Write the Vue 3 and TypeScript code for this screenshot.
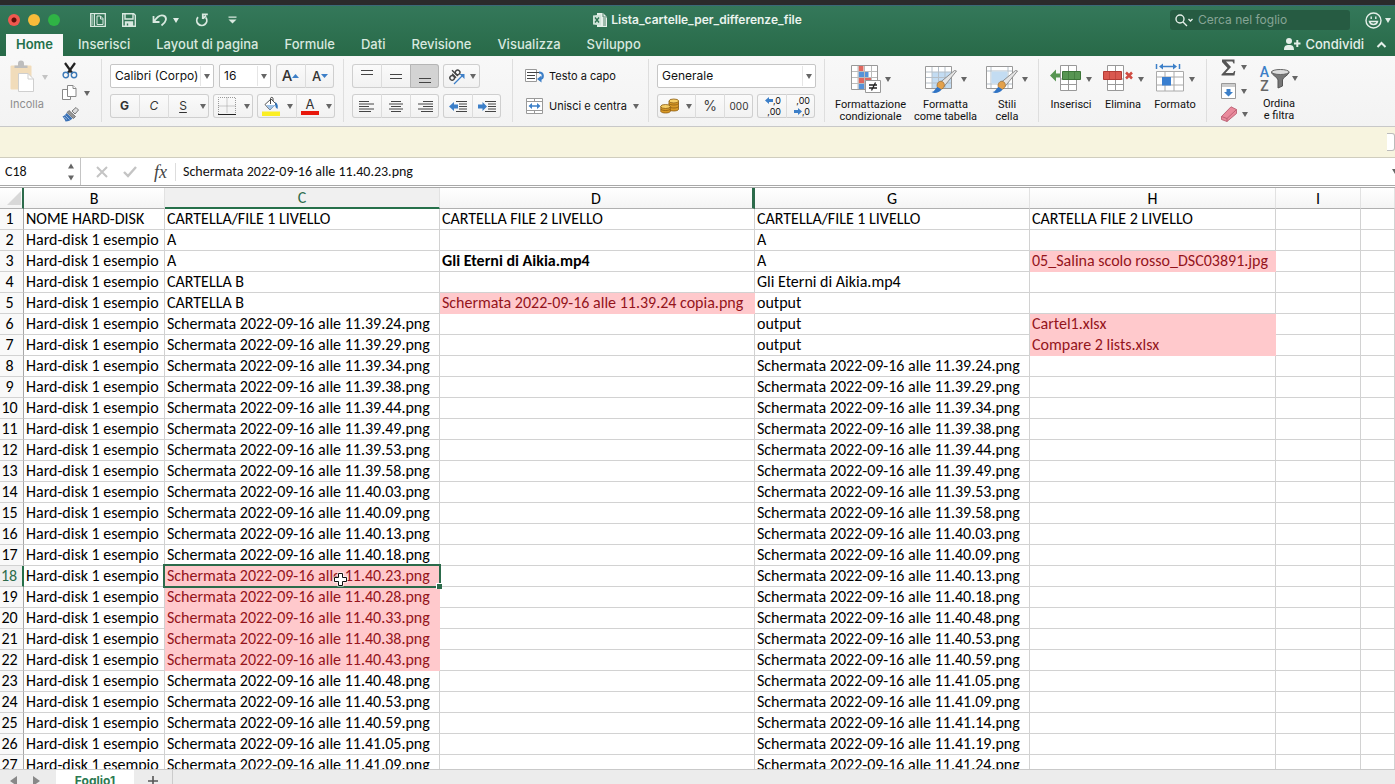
<script setup lang="ts">
import { ref } from 'vue'

interface Cell {
  text: string
  bad?: boolean
  bold?: boolean
}
interface Row {
  n: number
  cells: Cell[]
}

const tabs: string[] = ['Home', 'Inserisci', 'Layout di pagina', 'Formule', 'Dati', 'Revisione', 'Visualizza', 'Sviluppo']
const columns: string[] = ['B', 'C', 'D', 'G', 'H', 'I', '']
const selectedRow = 18

const shot = (time: string): string => `Schermata 2022-09-16 alle ${time}.png`

const times: string[] = [
  '11.39.24', '11.39.29', '11.39.34', '11.39.38', '11.39.44', '11.39.49', '11.39.53', '11.39.58',
  '11.40.03', '11.40.09', '11.40.13', '11.40.18', '11.40.23', '11.40.28', '11.40.33', '11.40.38',
  '11.40.43', '11.40.48', '11.40.53', '11.40.59', '11.41.05', '11.41.09', '11.41.14', '11.41.19', '11.41.24',
]
const missing: string[] = ['11.40.23', '11.40.28', '11.40.33', '11.40.38', '11.40.43']

const firstList: Cell[] = [
  { text: 'CARTELLA/FILE 1 LIVELLO' },
  { text: 'A' },
  { text: 'A' },
  { text: 'CARTELLA B' },
  { text: 'CARTELLA B' },
  ...times.map((t) => ({ text: shot(t), bad: missing.includes(t) })),
]
const secondList: Cell[] = [
  { text: 'CARTELLA/FILE 1 LIVELLO' },
  { text: 'A' },
  { text: 'A' },
  { text: 'Gli Eterni di Aikia.mp4' },
  { text: 'output' },
  { text: 'output' },
  { text: 'output' },
  ...times.filter((t) => !missing.includes(t)).map((t) => ({ text: shot(t) })),
]
const firstSub: Record<number, Cell> = {
  1: { text: 'CARTELLA FILE 2 LIVELLO' },
  3: { text: 'Gli Eterni di Aikia.mp4', bold: true },
  5: { text: 'Schermata 2022-09-16 alle 11.39.24 copia.png', bad: true },
}
const secondSub: Record<number, Cell> = {
  1: { text: 'CARTELLA FILE 2 LIVELLO' },
  3: { text: '05_Salina scolo rosso_DSC03891.jpg', bad: true },
  6: { text: 'Cartel1.xlsx', bad: true },
  7: { text: 'Compare 2 lists.xlsx', bad: true },
}
const empty: Cell = { text: '' }

const rows: Row[] = Array.from({ length: 27 }, (_, i) => {
  const n = i + 1
  return {
    n,
    cells: [
      { text: n === 1 ? 'NOME HARD-DISK' : 'Hard-disk 1 esempio' },
      firstList[i],
      firstSub[n] ?? empty,
      secondList[i],
      secondSub[n] ?? empty,
      empty,
      empty,
    ],
  }
})

const cellName = ref('C18')
const formula = ref(shot('11.40.23'))
const search = ref('')
</script>

<template>
  <div class="window">
    <div class="desktop-strip"></div>
    <header class="top">
      <div class="titlebar">
        <div class="title-left">
          <div class="lights">
            <button class="light close" aria-label="Chiudi"></button>
            <button class="light min" aria-label="Riduci"></button>
            <button class="light max" aria-label="Ingrandisci"></button>
          </div>
          <div class="quick">
            <button aria-label="Modelli">
              <svg width="16" height="14" viewBox="0 0 16 14" fill="none" stroke="#d9e9e0"><path d="M.7.7h14.6v12.6H.7z" stroke-width="1.300" /><path d="M4.500 1v12M1.500 3h2M1.500 5h2M1.500 7h2M1.500 9h2M1.500 11h2" /><path d="M7 3h3.500l2.500 2.500v6H7zM10.500 3v3H13" /></svg>
            </button>
            <button aria-label="Salva">
              <svg width="14" height="14" viewBox="0 0 14 14" fill="none" stroke="#d9e9e0" stroke-width="1.400"><path d="M.7.7h11l1.600 1.600v11H.7z" /><path d="M3 1v5h8V1" /><path d="M3.500 13V9h7v4" fill="#d9e9e0" /><path d="M5.500 10.500v2" stroke="#2c7150" /></svg>
            </button>
            <button aria-label="Annulla">
              <svg width="16" height="14" viewBox="0 0 16 14" fill="none" stroke="#d9e9e0" stroke-width="1.800"><path d="M1.500 3v6h6M2 8.500C5 4 8 1.500 11.500 2.700c4 1.500 3 6.300-2 9.800" /></svg>
              <i class="caret light-caret"></i>
            </button>
            <button aria-label="Ripeti">
              <svg width="14" height="14" viewBox="0 0 14 14" fill="none" stroke="#d9e9e0" stroke-width="1.800"><path d="M3 4.200A5 5 0 1 0 10.800 4.500M7.800 6V1.400h5M8 5.600l3-3" /></svg>
            </button>
            <button aria-label="Personalizza">
              <svg width="9" height="8" viewBox="0 0 9 8" fill="#d9e9e0"><path d="M.5.5h8v1.300h-8zM.5 3.500h8l-4 4z" /></svg>
            </button>
          </div>
        </div>
        <h1 class="title">
          <svg width="14" height="14" viewBox="0 0 14 14"><path d="M4 0h6l4 4v10H4z" fill="#e5f0ea" /><path d="M10 0v4h4" fill="none" stroke="#55856c" /><path d="M10 6h3M10 8h3M10 10h3M10 12h3" stroke="#55856c" /><path d="M0 2.500 8 1.500v11L0 11.500z" fill="#cfe3d8" /><path d="m2 4.500 4 5M6 4.500l-4 5" stroke="#2c7150" stroke-width="1.300" /></svg>
          Lista_cartelle_per_differenze_file
        </h1>
        <div class="title-right">
          <label class="search">
            <svg width="19" height="13" viewBox="0 0 19 13" fill="none" stroke="#e5efe9" stroke-width="1.400"><circle cx="5" cy="5" r="4" /><path d="m8 8 4 4M13.500 5l2 2 2-2" /></svg>
            <input v-model="search" type="text" placeholder="Cerca nel foglio" aria-label="Cerca nel foglio" />
          </label>
          <button class="smile" aria-label="Commenti e suggerimenti">
            <svg width="17" height="17" viewBox="0 0 17 17" fill="none" stroke="#e5efe9" stroke-width="1.400"><circle cx="8.500" cy="8.500" r="7.500" /><path d="M4.500 9.500c1 4 7 4 8 0zM6.200 4.500v2.500M10.800 4.500v2.500" /></svg>
            <i class="caret light-caret"></i>
          </button>
        </div>
      </div>
      <nav class="tabs">
        <button v-for="t in tabs" :key="t" :class="{ active: t === 'Home' }">{{ t }}</button>
        <button class="share">
          <svg width="17" height="12" viewBox="0 0 17 12" fill="#e5efe9"><circle cx="5" cy="3" r="3" /><path d="M0 12c0-4 1.500-5 5-5s5 1 5 5zM12.300 2h2v7h-2z" /><path d="M10 4.500h6.500v2H10z" /></svg>
          Condividi
        </button>
        <button class="collapse" aria-label="Comprimi barra multifunzione">
          <svg width="11" height="7" viewBox="0 0 11 7" fill="none" stroke="#e5efe9" stroke-width="2"><path d="m1.500 6 4-4 4 4" /></svg>
        </button>
      </nav>
    </header>

    <section class="ribbon" aria-label="Home">
      <div class="group clipboard">
        <button class="paste">
          <span class="iconrow">
            <svg width="26" height="31" viewBox="0 0 26 31"><rect x=".5" y="3.500" width="21" height="24" rx="1" fill="#f1dcba" /><path d="M4.500 6V3.500H8V1.500a2 2 0 0 1 6 0v2h3.500V6z" fill="#bdbdbd" /><path d="M8.500 11.500H18l5.500 5.500v12.500h-15z" fill="#fff" stroke="#cfcfcf" /><path d="M18 11.500V17h5.500" fill="none" stroke="#cfcfcf" /></svg>
            <i class="caret pale"></i>
          </span>
          <span>Incolla</span>
        </button>
        <div class="clip-tools">
          <button aria-label="Taglia">
            <svg width="16" height="17" viewBox="0 0 16 17" fill="none"><path d="m3 1 7.500 10.500M13 1 5.500 11.500" stroke="#222" stroke-width="2.200" /><circle cx="3.800" cy="13" r="2.700" stroke="#3d7ab8" stroke-width="1.400" /><circle cx="12" cy="13" r="2.700" stroke="#3d7ab8" stroke-width="1.400" /></svg>
          </button>
          <button aria-label="Copia">
            <svg width="15" height="16" viewBox="0 0 15 16" fill="#fff" stroke="#888"><path d="M.5 4.500h6l2 2v8h-8z" /><path d="M5.500.5H11l3 3v8H5.500z" /><path d="M11 .5v3h3" /></svg>
            <i class="caret"></i>
          </button>
          <button aria-label="Copia formato">
            <svg width="17" height="15" viewBox="0 0 17 15"><path d="m10 4 4-3.500 2.500 2.500L13 7z" fill="#ddd" stroke="#777" /><path d="m7 3.500 6.500 6-2 2-6.500-6z" fill="#999" stroke="#555" stroke-width=".7" /><path d="m4.500 6 6 5.500c-2 2-4 3-7 3C3 12 1.500 11 .5 9.500 2 9 3.500 8 4.500 6z" fill="#3a71b5" /><path d="m2 10 3 2.500M3.500 8.500l4 4" stroke="#bdd1ea" stroke-width=".7" /></svg>
          </button>
        </div>
      </div>

      <div class="group font">
        <div class="line">
          <label class="combo wide"><select aria-label="Tipo di carattere"><option>Calibri (Corpo)</option></select><i class="caret"></i></label>
          <label class="combo size"><select aria-label="Dimensione carattere"><option>16</option></select><i class="caret"></i></label>
          <div class="seg">
            <button class="big" aria-label="Aumenta carattere">A<svg width="7" height="5" viewBox="0 0 7 5"><path d="m0 4 3.500-4L7 4z" fill="#3c7fc8" /></svg></button>
            <button class="mid" aria-label="Riduci carattere">A<svg width="7" height="5" viewBox="0 0 7 5"><path d="m0 0 3.500 4L7 0z" fill="#3c7fc8" /></svg></button>
          </div>
        </div>
        <div class="line tight">
          <div class="seg">
            <button class="g">G</button>
            <button class="c">C</button>
            <button class="s">S</button>
            <button class="drop" aria-label="Opzioni sottolineato"><i class="caret"></i></button>
          </div>
          <div class="seg">
            <button class="borders" aria-label="Bordi"><svg width="18" height="18" viewBox="0 0 18 18" fill="none" stroke="#9a9a9a"><path d="M.5 17V.5h17V17M9 .5v16M.5 9h17" stroke-dasharray="1 1" /><path d="M0 17.500h18" stroke="#222" /></svg></button>
            <button class="drop" aria-label="Opzioni bordi"><i class="caret"></i></button>
          </div>
          <div class="seg">
            <button class="fill" aria-label="Colore riempimento"><svg width="18" height="19" viewBox="0 0 18 19"><path d="M3 7.500 9 2l5 5-6 6z" fill="#fff" stroke="#555" /><path d="M4 8h9.500L8 13z" fill="#9fc3e8" /><path d="M8.500 7V1.500c0-1.500 2.500-1.500 2.500 0V4" fill="none" stroke="#444" /><path d="M13 5c2 1 3.500 3 2.500 7-2-1-2.500-3-2-5z" fill="#2d73bd" /><path d="M0 14.500h18V19H0z" fill="#fbee23" /></svg></button>
            <button class="drop" aria-label="Colori riempimento"><i class="caret"></i></button>
            <button class="fontcolor" aria-label="Colore carattere"><span>A</span><b></b></button>
            <button class="drop" aria-label="Colori carattere"><i class="caret"></i></button>
          </div>
        </div>
      </div>

      <div class="group align">
        <div class="line tight">
          <div class="seg">
            <button aria-label="Allinea in alto"><svg width="14" height="16" viewBox="0 0 14 16" stroke="#444"><path d="M1 2.500h12M1 6.500h12" /></svg></button>
            <button aria-label="Allinea al centro"><svg width="14" height="16" viewBox="0 0 14 16" stroke="#444"><path d="M1 6.500h12M1 10.500h12" /></svg></button>
            <button class="pressed" aria-label="Allinea in basso"><svg width="14" height="16" viewBox="0 0 14 16" stroke="#444"><path d="M1 10.500h12M1 14.500h12" /></svg></button>
          </div>
          <div class="seg">
            <button class="orient" aria-label="Orientamento">
              <svg width="19" height="18" viewBox="0 0 19 18"><g transform="rotate(-45 8 8)" fill="none" stroke="#444" stroke-width="1.400"><circle cx="4" cy="8" r="2.300" /><path d="M6.800 5.200v5.500M9.300 2.500v8.200" /><circle cx="11.700" cy="8" r="2.300" /></g><path d="m7 17 9-9" stroke="#3c7fc8" stroke-width="1.300" /><path d="M12.500 7h5v5z" fill="#3c7fc8" /></svg>
              <i class="caret"></i>
            </button>
          </div>
        </div>
        <div class="line tight">
          <div class="seg">
            <button aria-label="Allinea a sinistra"><svg width="16" height="11" viewBox="0 0 16 11" stroke="#444"><path d="M0 .5h10M0 3h15M0 5.500h10M0 8h15M0 10.500h12" /></svg></button>
            <button aria-label="Centra"><svg width="16" height="11" viewBox="0 0 16 11" stroke="#444"><path d="M3 .5h10M1 3h14M3 5.500h10M1 8h14M3 10.500h10" /></svg></button>
            <button aria-label="Allinea a destra"><svg width="16" height="11" viewBox="0 0 16 11" stroke="#444"><path d="M6 .5h10M1 3h15M6 5.500h10M1 8h15M4 10.500h12" /></svg></button>
          </div>
          <div class="seg">
            <button aria-label="Riduci rientro"><svg width="18" height="11" viewBox="0 0 18 11"><path d="M7 .5h11M10 3h8M10 5.500h8M10 8h8M7 10.500h11" stroke="#444" /><path d="m0 5.500 5-4.500v2.500h4v4H5V10z" fill="#3c7fc8" /></svg></button>
            <button aria-label="Aumenta rientro"><svg width="18" height="11" viewBox="0 0 18 11"><path d="M7 .5h11M10 3h8M10 5.500h8M10 8h8M7 10.500h11" stroke="#444" /><path d="M9 5.500 4.500 1v2.500H0v4h4.500V10z" fill="#3c7fc8" /></svg></button>
          </div>
        </div>
      </div>

      <div class="group wrap">
        <button class="text-tool">
          <svg width="20" height="14" viewBox="0 0 20 14"><path d="M.5.500h11v12H.5z" fill="#fff" stroke="#999" /><path d="M2 3.500h12M2 6.500h8M2 9.500h8" stroke="#444" /><path d="M14 3.500c5 0 5 6 1 6.500" fill="none" stroke="#3c7fc8" stroke-width="2" /><path d="m12 10 4.500-3.500v7z" fill="#3c7fc8" /></svg>
          Testo a capo
        </button>
        <button class="text-tool">
          <svg width="20" height="16" viewBox="0 0 20 16"><path d="M1.500.5h16v15h-16zM1.500 3.500h16M1.500 12.500h16M9.500.5v3M9.500 12.500v3" fill="#fff" stroke="#999" /><path d="M6 8h7" stroke="#3c7fc8" stroke-width="1.500" /><path d="m3.500 8 3.500-3v6zM15.500 8 12 5v6z" fill="#3c7fc8" /></svg>
          Unisci e centra
          <i class="caret"></i>
        </button>
      </div>

      <div class="group number">
        <div class="line">
          <label class="combo full"><select aria-label="Formato numero"><option>Generale</option></select><i class="caret"></i></label>
        </div>
        <div class="line tight">
          <div class="seg">
            <button class="coins" aria-label="Valuta"><svg width="20" height="16" viewBox="0 0 20 16" stroke="#8a5a10" stroke-width=".8"><path d="M9 3v8.500c1 2 8.500 2 9.500 0V3z" fill="#d99a27" /><path d="M9 5.500c1 2 8.500 2 9.500 0M9 8.500c1 2 8.500 2 9.500 0" fill="none" /><ellipse cx="13.800" cy="3" rx="4.800" ry="2" fill="#f6cf68" /><path d="M.8 8.500v5c1 2 8.500 2 9.500 0v-5z" fill="#d99a27" /><path d="M.8 11c1 2 8.500 2 9.500 0" fill="none" /><ellipse cx="5.500" cy="8.500" rx="4.800" ry="2" fill="#f6cf68" /></svg></button>
            <button class="drop" aria-label="Opzioni valuta"><i class="caret"></i></button>
            <button class="pct">%</button>
            <button class="thousand">000</button>
          </div>
          <div class="seg">
            <button class="dec" aria-label="Aumenta decimali"><span><svg width="8" height="7" viewBox="0 0 8 7"><path d="m0 3.500 4-3.500v2h4v3H4v2z" fill="#3c7fc8" /></svg>,0</span><span>,00</span></button>
            <button class="dec" aria-label="Riduci decimali"><span>,00</span><span><svg width="8" height="7" viewBox="0 0 8 7"><path d="M8 3.500 4 0v2H0v3h4v2z" fill="#3c7fc8" /></svg>,0</span></button>
          </div>
        </div>
      </div>

      <div class="group styles">
        <button class="large w75">
          <span class="iconrow"><svg width="30" height="30" viewBox="0 0 30 30"><path d="M.5 1.500h26v24H.5z" fill="#fff" stroke="#999" /><path d="M7.500 2v5h5V2z" fill="#e0685f" /><path d="M7.500 8h10v5h-10z" fill="#5593d8" /><path d="M7.500 14h13v5h-13z" fill="#e0685f" /><path d="M7.500 20h6v5h-6z" fill="#5593d8" /><path d="M1 7.500h25M1 13.500h25M1 19.500h25M7 2v23M13.500 2v23M20.500 2v23" stroke="#bbb" fill="none" /><path d="M14.500 16.500h15v12h-15z" fill="#fff" stroke="#999" /><path d="M18 21h8M18 24h8M24.500 18.500l-4 8" stroke="#222" stroke-width="1.300" /></svg><i class="caret"></i></span>
          <span>Formattazione<br />condizionale</span>
        </button>
        <button class="large w75">
          <span class="iconrow"><svg width="32" height="30" viewBox="0 0 32 30"><path d="M.5 2.500h26v22H.5z" fill="#fff" stroke="#999" /><path d="M7 8h19v16H7z" fill="#c3dcf2" /><path d="M1 8h25M1 13.500h25M1 19h25M7 3v21M13.500 3v21M20 3v21" stroke="#b5bfc8" /><path d="m31.500 7-2-.500L15 18.500l4 4z" fill="#e4e4e4" stroke="#777" stroke-width=".8" /><path d="M12 21c1-4 4-4.500 6-3 2 2 2 5-1 7-2 1-5 0-5-4z" fill="#e3a14b" stroke="#8a5a20" stroke-width=".6" /><path d="M6.500 28c3 0 3-3 6-5l4 2.500c-2 3-7 4.500-10 2.500z" fill="#2f73c4" /></svg><i class="caret"></i></span>
          <span>Formatta<br />come tabella</span>
        </button>
        <button class="large w48">
          <span class="iconrow"><svg width="32" height="30" viewBox="0 0 32 30"><path d="M.5 2.500h26v22H.5z" fill="#fff" stroke="#999" /><path d="M1 7h25M1 20h25M5 3v21M22 3v21" stroke="#b5bfc8" /><path d="M5.500 7.500h16v12h-16z" fill="#c3dcf2" /><path d="m31.500 7-2-.500L15 18.500l4 4z" fill="#e4e4e4" stroke="#777" stroke-width=".8" /><path d="M12 21c1-4 4-4.500 6-3 2 2 2 5-1 7-2 1-5 0-5-4z" fill="#e3a14b" stroke="#8a5a20" stroke-width=".6" /><path d="M6.500 28c3 0 3-3 6-5l4 2.500c-2 3-7 4.500-10 2.500z" fill="#2f73c4" /></svg><i class="caret"></i></span>
          <span>Stili<br />cella</span>
        </button>
      </div>

      <div class="group cellsgroup">
        <button class="large w52">
          <span class="iconrow"><svg width="32" height="30" viewBox="0 0 32 30"><path d="M10.500 1.500h16v25h-16zM10.500 20.500h16M18.500 1.500v25M10.500 15h16" fill="#fff" stroke="#999" /><path d="M12.500 7.500h18v8h-18z" fill="#579552" stroke="#3b7437" /><path d="M18.500 8v7M24.500 8v7" stroke="#467f42" /><path d="m0 11.500 6-6v4h4v4H6v4z" fill="#579552" /></svg><i class="caret"></i></span>
          <span>Inserisci</span>
        </button>
        <button class="large w52">
          <span class="iconrow"><svg width="32" height="30" viewBox="0 0 32 30"><path d="M5.500 1.500h16v25h-16zM5.500 20.500h16M13.500 1.500v25M5.500 15h16" fill="#fff" stroke="#999" /><path d="M1.500 7.500h18v8h-18z" fill="#d9584f" stroke="#b33b34" /><path d="M7.500 8v7M13.500 8v7" stroke="#c2463f" /><path d="m24 8.500 6 6M30 8.500l-6 6" stroke="#cf4b42" stroke-width="2.500" /></svg><i class="caret"></i></span>
          <span>Elimina</span>
        </button>
        <button class="large w52">
          <span class="iconrow"><svg width="30" height="30" viewBox="0 0 30 30"><path d="M1.500 7.500h27v19.500h-27zM10 7.500v19.500M19 7.500v19.500M1.500 13h27M1.500 21h27" fill="#fff" stroke="#aaa" /><path d="M7 13h9v8.500H7z" fill="#3a7fd0" /><path d="M1.500 0v5M24.500 0v5" stroke="#3c7fc8" stroke-width="1.500" /><path d="M7 2.500h12" stroke="#3c7fc8" stroke-width="1.500" /><path d="m4 2.500 4-3v6zM22 2.500l-4-3v6z" fill="#3c7fc8" /></svg><i class="caret"></i></span>
          <span>Formato</span>
        </button>
      </div>

      <div class="group edit">
        <div class="edit-tools">
          <button aria-label="Somma automatica"><svg width="15" height="17" viewBox="0 0 15 17"><path d="M1 .5h12.500v4h-1l-1-2H5l5 5.500-5.500 6H12l1.300-2h1l-.8 4.500H.5v-1l6-6.500-5.500-6z" fill="#555" /></svg><i class="caret"></i></button>
          <button aria-label="Riempimento"><svg width="15" height="16" viewBox="0 0 15 16"><path d="M.5.5h14v15H.5z" fill="#fff" stroke="#999" /><path d="M1 1h13v3H1z" fill="#ccc" /><path d="M5.500 6h4v3H12l-4.500 4.500L3 9h2.500z" fill="#3c7fc8" /></svg><i class="caret"></i></button>
          <button aria-label="Cancella"><svg width="16" height="16" viewBox="0 0 16 16" stroke="#b4566a" stroke-width=".8"><path d="m.5 10.500 9.500-9.700 5.500 2.700v4L6 15.500l-5.500-2z" fill="#e98a9c" /><path d="m.5 10.500 5.500 2 9.500-9M6 12.500v3" fill="none" /></svg><i class="caret"></i></button>
        </div>
        <button class="large w52">
          <span class="iconrow sort"><span class="az"><b>A</b><b>Z</b></span><svg width="19" height="20" viewBox="0 0 19 20"><path d="M.5 3c0 3 6 5 6.500 8v8l4.500-2v-6c.5-3 6.500-5 6.500-8z" fill="#777" stroke="#555" /><ellipse cx="9.300" cy="3" rx="8.800" ry="2.500" fill="#ddd" stroke="#666" /></svg><i class="caret"></i></span>
          <span>Ordina<br />e filtra</span>
        </button>
      </div>
    </section>

    <div class="notice"><button aria-label="Chiudi avviso"></button></div>

    <div class="formula-bar">
      <div class="namebox">
        <input v-model="cellName" type="text" aria-label="Casella nome" />
        <svg width="8" height="18" viewBox="0 0 8 18" fill="#666"><path d="m1 5.500 3-5 3 5zM1 12.500h6l-3 5z" /></svg>
      </div>
      <button aria-label="Annulla modifica"><svg width="12" height="12" viewBox="0 0 12 12" stroke="#c4c4c4" stroke-width="2"><path d="m1 1 10 10M11 1 1 11" /></svg></button>
      <button aria-label="Conferma"><svg width="14" height="12" viewBox="0 0 14 12" fill="none" stroke="#c4c4c4" stroke-width="2.400"><path d="m1 6 4 4 8-9" /></svg></button>
      <button class="fx">fx</button>
      <input v-model="formula" class="formula" type="text" aria-label="Barra della formula" />
      <i class="caret"></i>
    </div>

    <main class="sheet">
      <table>
        <colgroup>
          <col class="k-head" /><col class="k-b" /><col class="k-c" /><col class="k-d" /><col class="k-c" /><col class="k-h" /><col class="k-i" /><col />
        </colgroup>
        <thead>
          <tr>
            <th class="corner"><svg width="14" height="14" viewBox="0 0 14 14"><path d="M14 0v14H0z" fill="#d8d8d8" /></svg></th>
            <th v-for="c in columns" :key="c" scope="col" :class="{ current: c === 'C', hiddenafter: c === 'D' }">{{ c }}</th>
          </tr>
        </thead>
        <tbody>
          <tr v-for="r in rows" :key="r.n">
            <th scope="row" :class="{ current: r.n === selectedRow }">{{ r.n }}</th>
            <td v-for="(c, i) in r.cells" :key="i" :class="{ bad: c.bad, bold: c.bold }">
              {{ c.text }}
              <span v-if="r.n === selectedRow && i === 1" class="selection">
                <svg class="pointer" width="15" height="15" viewBox="0 0 15 15"><path d="M5.500 1.500h4v4h4v4h-4v4h-4v-4h-4v-4h4z" fill="#fff" stroke="#fff" stroke-width="2" /><path d="M5.500 1.500h4v4h4v4h-4v4h-4v-4h-4v-4h4z" fill="#fff" stroke="#111" /></svg>
              </span>
            </td>
          </tr>
        </tbody>
      </table>
    </main>

    <footer class="sheet-tabs">
      <button class="nav" aria-label="Foglio precedente"><svg width="7" height="10" viewBox="0 0 7 10"><path d="M7 0v10L0 5z" fill="#888" /></svg></button>
      <button class="nav" aria-label="Foglio successivo"><svg width="7" height="10" viewBox="0 0 7 10"><path d="M0 0v10l7-5z" fill="#888" /></svg></button>
      <button class="sheet-tab">Foglio1</button>
      <button class="add" aria-label="Aggiungi foglio"><svg width="10" height="10" viewBox="0 0 10 10" stroke="#555" stroke-width="1.600"><path d="M5 0v10M0 5h10" /></svg></button>
    </footer>
  </div>
</template>

<style>
body {
  margin: 0;
}
</style>

<style scoped>
* {
  box-sizing: border-box;
}
.window {
  height: 100vh;
  display: flex;
  flex-direction: column;
  overflow: hidden;
  background: #fff;
  color: #111;
  font: 12px/16px Inter, 'Liberation Sans', sans-serif;
}
button,
input,
select {
  font: inherit;
  color: inherit;
  background: none;
  border: 0;
  padding: 0;
  margin: 0;
  outline: 0;
}
button {
  display: flex;
  align-items: center;
  justify-content: center;
  flex: none;
  white-space: nowrap;
}
svg {
  display: block;
  flex: none;
  overflow: visible;
}
.caret {
  flex: none;
  width: 0;
  height: 0;
  border: 3px solid transparent;
  border-top: 5px solid #666;
  border-bottom: 0;
}
.caret.pale {
  border-top-color: #c4c4c4;
}
.light-caret {
  border-top-color: #e0ece6;
}
.desktop-strip {
  flex: none;
  height: 5px;
  background: #2b2b2b;
}
.top {
  flex: none;
  background: linear-gradient(#34785a, #286a48);
  border-top: 1px solid #3a6a78;
  color: #d8e8df;
}
.titlebar {
  height: 28px;
  display: grid;
  grid-template-columns: 1fr auto 1fr;
  align-items: center;
}
.title-left,
.lights,
.quick,
.title-right {
  display: flex;
  align-items: center;
}
.lights {
  gap: 8px;
  padding-left: 8px;
}
.light {
  width: 12px;
  height: 12px;
  border-radius: 50%;
}
.close {
  background: radial-gradient(circle, #5e0f0a 0 2px, #f1584f 3px);
}
.min {
  background: #f8bb3a;
}
.max {
  background: #2fb445;
}
.quick {
  gap: 16px;
  padding-left: 30px;
}
.quick button {
  gap: 5px;
}
.quick button:last-child {
  margin-left: 3px;
}
.title {
  margin: 0;
  display: flex;
  align-items: center;
  gap: 4px;
  font-size: 12px;
  line-height: 16px;
  font-weight: 600;
  color: #eaf3ee;
}
.title-right {
  justify-content: flex-end;
  padding-right: 4px;
}
.search {
  display: flex;
  align-items: center;
  gap: 4px;
  width: 180px;
  height: 20px;
  padding-left: 5px;
  border-radius: 3px;
  background: #265b42;
}
.search input {
  flex: 1;
  min-width: 0;
}
.search input::placeholder {
  color: #86a596;
  opacity: 1;
}
.smile {
  margin-left: 15px;
  gap: 3px;
}
.tabs {
  display: flex;
  height: 22px;
  padding: 0 8px 0 6px;
  font-size: 13px;
  font-weight: 500;
}
.tabs button {
  padding: 0 13px 2px;
}
.tabs button.active {
  padding: 0 10px 2px;
  margin-right: 2px;
  background: #f8f8f8;
  color: #23704b;
  font-weight: 600;
}
.tabs .share {
  margin-left: auto;
  padding: 0 12px 2px 0;
  gap: 4px;
  color: #e5efe9;
}
.tabs .collapse {
  padding: 0 0 2px;
}
.ribbon {
  flex: none;
  display: flex;
  height: 71px;
  background: linear-gradient(#f8f8f8, #f3f3f3);
  border-bottom: 1px solid #c8c8c8;
  padding: 3px 0 4px;
}
.group {
  flex: none;
  display: flex;
  flex-direction: column;
  gap: 6px;
  padding: 5px 8px 0;
  border-right: 1px solid #dedede;
}
.group:last-child {
  border-right: 0;
}
.line {
  display: flex;
  gap: 5px;
  height: 24px;
}
.line.tight {
  gap: 4px;
}
.clipboard {
  flex-direction: row;
  width: 102px;
  padding: 3px 0 0 10px;
  gap: 14px;
}
.clip-tools {
  display: flex;
  flex-direction: column;
  align-items: flex-start;
  justify-content: space-between;
}
.clip-tools button {
  gap: 7px;
}
.paste {
  width: 38px;
  flex-direction: column;
  justify-content: flex-start;
  align-items: flex-start;
  gap: 4px;
  font-size: 11px;
  line-height: 14px;
  color: #8e8e8e;
}
.iconrow {
  display: flex;
  align-items: center;
  gap: 6px;
}
.font {
  width: 242px;
}
.combo {
  display: flex;
  align-items: center;
  border: 1px solid #c6c6c6;
  border-radius: 2px;
  background: #fff;
  padding-right: 3px;
}
.combo select {
  flex: 1;
  min-width: 0;
  height: 20px;
  appearance: none;
  padding-left: 4px;
  border-right: 1px solid #e6e6e6;
  white-space: nowrap;
}
.combo .caret {
  margin-left: 3px;
}
.wide {
  width: 104px;
}
.size {
  width: 52px;
}
.full {
  width: 159px;
}
.seg {
  display: flex;
  border-radius: 3px;
  background: linear-gradient(#fbfbfb, #f1f1f1);
  box-shadow: inset 0 0 0 1px #cfcfcf;
}
.seg button {
  width: 29px;
  border-left: 1px solid #dcdcdc;
}
.seg button:first-child {
  border-left: 0;
}
.seg button.drop {
  width: 12px;
  border-left: 0;
}
.seg button.pressed {
  background: #d3d3d3;
  border: 1px solid #b5b5b5;
  border-radius: 0 3px 3px 0;
}
.seg .big {
  font-size: 15px;
  font-weight: 500;
  color: #333;
}
.seg .mid {
  font-size: 13px;
  font-weight: 500;
  color: #333;
}
.g,
.c,
.s {
  font-size: 12px;
  color: #333;
}
.g {
  font-weight: 700;
}
.c {
  font-style: italic;
}
.s {
  text-decoration: underline;
  text-underline-offset: 2px;
}
.seg .borders {
  width: 28px;
}
.seg .fill,
.seg .fontcolor {
  width: 27px;
}
.seg .fontcolor {
  flex-direction: column;
  font-size: 13px;
  line-height: 14px;
  color: #333;
}
.fontcolor b {
  width: 18px;
  height: 4px;
  background: #e8180c;
}
.align {
  width: 169px;
}
.seg .orient {
  width: 37px;
  gap: 4px;
}
.wrap {
  width: 136px;
  padding-left: 12px;
}
.text-tool {
  height: 24px;
  gap: 4px;
  justify-content: flex-start;
  font-size: 11px;
}
.text-tool .caret {
  margin-left: 2px;
}
.number {
  width: 176px;
}
.seg .coins {
  width: 26px;
}
.seg .pct {
  font-size: 14px;
  color: #444;
}
.seg .thousand {
  font-size: 10px;
  color: #333;
}
.seg .dec {
  flex-direction: column;
  align-items: flex-end;
  padding-right: 5px;
  font-size: 9px;
  line-height: 11px;
}
.dec span {
  display: flex;
  align-items: center;
}
.large {
  flex-direction: column;
  justify-content: flex-start;
  align-items: center;
  gap: 5px;
  font: 11px/12px Roboto, 'Liberation Sans', sans-serif;
  text-align: center;
}
.large .iconrow {
  height: 30px;
  gap: 4px;
}
.styles,
.cellsgroup,
.edit {
  flex-direction: row;
  gap: 0;
}
.styles {
  width: 214px;
}
.w75 {
  width: 75px;
}
.w48 {
  width: 48px;
}
.w52 {
  width: 52px;
}
.cellsgroup {
  width: 168px;
  padding-left: 6px;
}
.edit {
  padding: 0 0 0 14px;
  gap: 5px;
}
.edit .large {
  padding-top: 5px;
}
.edit-tools {
  display: flex;
  flex-direction: column;
  justify-content: space-between;
}
.edit-tools button {
  justify-content: flex-start;
  gap: 5px;
}
.az {
  display: flex;
  flex-direction: column;
  font-size: 14px;
  line-height: 14px;
}
.az b {
  font-weight: 500;
  color: #666;
}
.az b:first-child {
  color: #3c7fc8;
}
.large .sort {
  gap: 2px;
}
.notice {
  flex: none;
  height: 31px;
  display: flex;
  justify-content: flex-end;
  align-items: center;
  background: #f7f4df;
  border-bottom: 1px solid #d0cdbe;
}
.notice button {
  width: 8px;
  height: 18px;
  background: #fff;
  border: 1px solid #bbb;
  border-left: 0;
  border-radius: 0 3px 3px 0;
}
.formula-bar {
  flex: none;
  display: flex;
  align-items: center;
  height: 27px;
  background: #fff;
  font: 14px/18px Carlito, Calibri, Lato, sans-serif;
}
.namebox {
  display: flex;
  align-items: center;
  align-self: stretch;
  width: 81px;
  padding: 0 5px;
  border-right: 1px solid #c4c4c4;
}
.namebox input {
  flex: 1;
  min-width: 0;
}
.formula-bar button {
  margin-left: 15px;
}
.formula-bar .fx {
  font: italic 18px/18px 'Liberation Serif', serif;
  color: #444;
  margin-left: 17px;
  padding-right: 8px;
  border-right: 1px solid #ddd;
}
.formula {
  flex: 1;
  min-width: 0;
  margin-left: 7px;
}
.formula-bar > .caret {
  margin-right: -3px;
}
.sheet {
  flex: 1;
  min-height: 0;
  overflow: hidden;
  border-top: 3px double #a8a8a8;
}
table {
  width: 100%;
  table-layout: fixed;
  border-collapse: separate;
  border-spacing: 0;
  font: 16px/20px Carlito, Calibri, Lato, sans-serif;
  color: #000;
}
.k-head {
  width: 24px;
}
.k-b {
  width: 141px;
}
.k-c {
  width: 275px;
}
.k-d {
  width: 315px;
}
.k-h {
  width: 246px;
}
.k-i {
  width: 85px;
}
th,
td {
  height: 21px;
  padding: 0;
  border-right: 1px solid #d2d2d2;
  border-bottom: 1px solid #d2d2d2;
  white-space: nowrap;
}
td {
  position: relative;
  padding-left: 2px;
}
th {
  font-weight: 400;
  background: #f9f9f9;
}
thead th {
  line-height: 19px;
  border-bottom-color: #b0b0b0;
  border-right-color: #e2e2e2;
  background: linear-gradient(#fff, #f4f4f4);
}
thead .corner {
  border-right: 2px solid #2c6b4b;
  padding: 0 2px 0 7px;
}
thead .current {
  border-bottom: 2px solid #26704a;
  background: #f0f0f0;
  color: #2c6b4b;
}
thead .hiddenafter {
  border-right: 3px solid #2c6b4b;
}
tbody th {
  border-right-color: #a8a8a8;
  padding-right: 4px;
  text-align: center;
}
tbody th.current {
  border-right: 2px solid #26704a;
  color: #2c6b4b;
  background: #f0f0f0;
}
.bad {
  background: #ffc9cc;
  border-color: #ffc9cc;
  color: #94141b;
}
.bold {
  font-weight: 700;
}
.selection {
  position: absolute;
  z-index: 2;
  inset: -2px -2px -2px -2px;
  border: 2px solid #2c6b4b;
}
.selection::after {
  content: '';
  position: absolute;
  right: -3px;
  bottom: -3px;
  width: 5px;
  height: 5px;
  background: #2c6b4b;
  border: 1px solid #fff;
  border-width: 1px 0 0 1px;
  box-sizing: content-box;
}
.pointer {
  position: absolute;
  left: 168px;
  top: 6px;
}
.sheet-tabs {
  flex: none;
  display: flex;
  height: 15px;
  overflow: hidden;
  background: #ececec;
  border-top: 1px solid #c9c9c9;
}
.sheet-tabs button {
  height: 21px;
}
.nav {
  width: 14px;
  margin-left: 6px;
}
.nav + .nav {
  margin: 0 13px 0 9px;
}
.sheet-tabs .sheet-tab {
  width: 78px;
  background: #fff;
  color: #2c7a52;
  font-weight: 700;
}
.sheet-tabs .add {
  width: 39px;
  border-right: 1px solid #ccc;
}
</style>
